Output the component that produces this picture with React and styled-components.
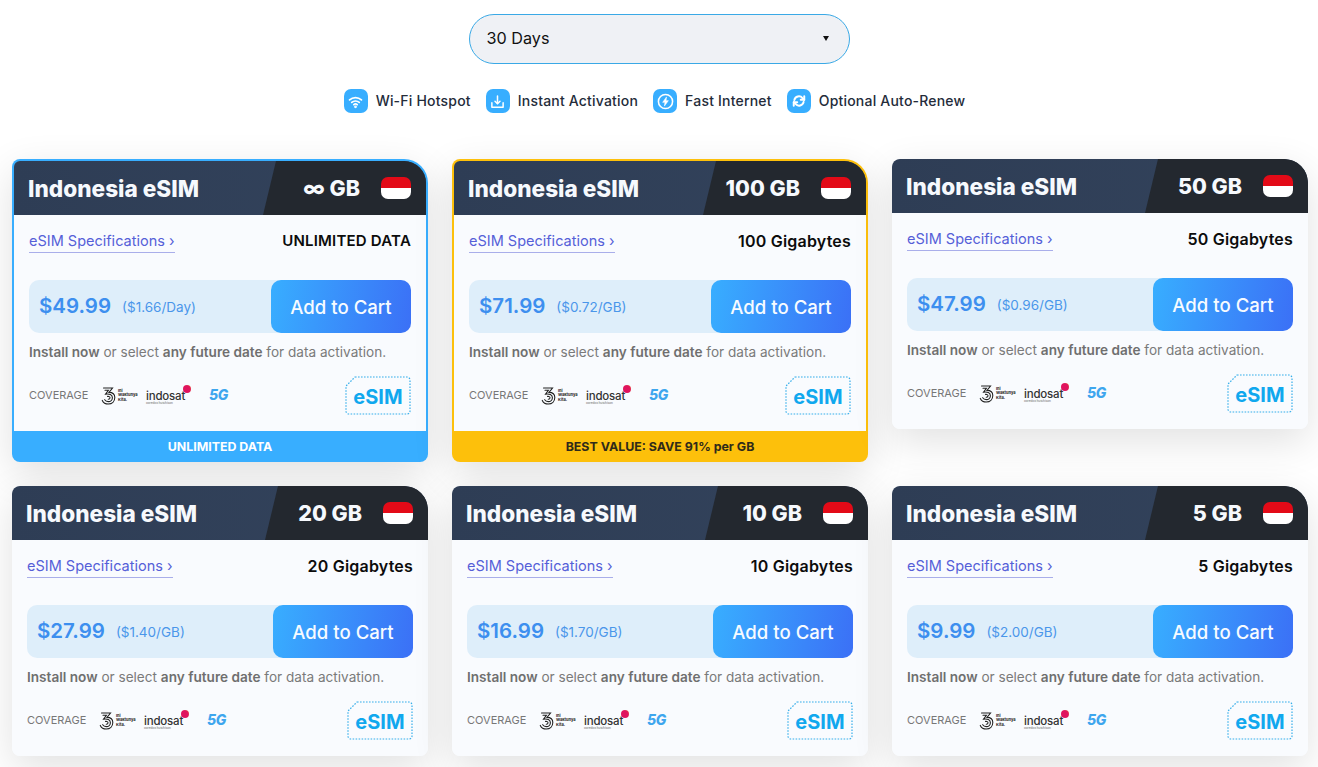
import React from "react";
import styled, { createGlobalStyle } from "styled-components";

const FONT = `Inter, "Noto Sans", "Liberation Sans", sans-serif`;

const plans = [
  { gb: "∞ GB", label: "UNLIMITED DATA", caps: true, price: "$49.99", unit: "($1.66/Day)", tone: "blue", banner: "UNLIMITED DATA" },
  { gb: "100 GB", label: "100 Gigabytes", price: "$71.99", unit: "($0.72/GB)", tone: "gold", banner: "BEST VALUE: SAVE 91% per GB" },
  { gb: "50 GB", label: "50 Gigabytes", price: "$47.99", unit: "($0.96/GB)" },
  { gb: "20 GB", label: "20 Gigabytes", price: "$27.99", unit: "($1.40/GB)" },
  { gb: "10 GB", label: "10 Gigabytes", price: "$16.99", unit: "($1.70/GB)" },
  { gb: "5 GB", label: "5 Gigabytes", price: "$9.99", unit: "($2.00/GB)" },
];

const toneColors = { blue: "#38aeff", gold: "#fdc00b" };

export default function App() {
  return (
    <Page>
      <GlobalStyle />
      <SelectWrap>
        <DaySelect>
          <span>30 Days</span>
          <Caret />
        </DaySelect>
      </SelectWrap>
      <Features>
        <Feature>
          <FeatureIcon>
            <svg width="15" height="15" viewBox="0 0 24 24" fill="none" stroke="#fff" strokeWidth="2.8" strokeLinecap="round">
              <path d="M2.5 9.5a14 14 0 0 1 19 0" />
              <path d="M6 13.5a9 9 0 0 1 12 0" />
              <path d="M9.3 17a4.2 4.2 0 0 1 5.4 0" />
              <circle cx="12" cy="20.5" r="0.8" fill="#fff" />
            </svg>
          </FeatureIcon>
          <FeatureText>Wi-Fi Hotspot</FeatureText>
        </Feature>
        <Feature>
          <FeatureIcon>
            <svg width="15" height="15" viewBox="0 0 24 24" fill="none" stroke="#fff" strokeWidth="2.4" strokeLinecap="round" strokeLinejoin="round">
              <path d="M3 14v7h18v-7" />
              <path d="M12 3v12" />
              <path d="M8 11.5l4 4 4-4" />
            </svg>
          </FeatureIcon>
          <FeatureText>Instant Activation</FeatureText>
        </Feature>
        <Feature>
          <FeatureIcon>
            <svg width="17" height="17" viewBox="0 0 24 24" fill="none" stroke="#fff" strokeWidth="2.2" strokeLinejoin="round">
              <circle cx="12" cy="12" r="10" />
              <path d="M13.4 5.5L8 13.2h3.2l-.7 5.3 5.5-7.7h-3.2z" fill="#fff" strokeWidth="0.8" />
            </svg>
          </FeatureIcon>
          <FeatureText>Fast Internet</FeatureText>
        </Feature>
        <Feature>
          <FeatureIcon>
            <svg width="14" height="14" viewBox="0 0 24 24" fill="none" stroke="#fff" strokeWidth="3.4" strokeLinecap="round" strokeLinejoin="round">
              <path d="M4 10.5a8 8 0 0 1 14-3.5L21 10" />
              <path d="M21 4v6h-6" />
              <path d="M20 13.5a8 8 0 0 1-14 3.5L3 14" />
              <path d="M3 20v-6h6" />
            </svg>
          </FeatureIcon>
          <FeatureText>Optional Auto-Renew</FeatureText>
        </Feature>
      </Features>
      <Grid>
        {plans.map((plan) => (
          <PlanCard key={plan.gb} plan={plan} />
        ))}
      </Grid>
    </Page>
  );
}

function PlanCard({ plan }) {
  const { tone } = plan;
  return (
    <Card $tone={tone}>
      <Header>
        <Title>Indonesia eSIM</Title>
        <HeaderRight>
          <Amount>{plan.gb}</Amount>
          <Flag />
        </HeaderRight>
      </Header>
      <Body>
        <SpecRow>
          <SpecLink>eSIM Specifications ›</SpecLink>
          <DataLabel $caps={plan.caps}>{plan.label}</DataLabel>
        </SpecRow>
        <PriceBar>
          <PriceInfo>
            <Price>{plan.price}</Price>
            <Unit>{plan.unit}</Unit>
          </PriceInfo>
          <CartButton>Add to Cart</CartButton>
        </PriceBar>
        <Note>
          <b>Install now</b> or select <b>any future date</b> for data activation.
        </Note>
        <CoverageRow>
          <Coverage>
            <CoverageLabel>COVERAGE</CoverageLabel>
            <TriLogo>
              <svg width="15" height="18" viewBox="0 0 15 18" fill="none" stroke="#222" strokeWidth="1.1" strokeLinecap="round">
                <path d="M2.5 1h9L8 5.4c3.3 0 5.8 1.8 5.8 5.2 0 4-2.9 6.4-6.5 6.4-2.8 0-5-1.4-6-3.6" />
                <path d="M4 3.2h3.4L4.6 7.1c3.6-.6 6.8.6 6.8 3.6 0 2.3-1.9 3.9-4.1 3.9-1.6 0-2.9-.8-3.6-1.9" />
                <path d="M6.5 9.4c1.4-.2 2.5.3 2.5 1.4 0 .9-.8 1.5-1.7 1.5" />
              </svg>
              <TriText>
                Ini
                <br />
                Waktunya
                <br />
                Kita.
              </TriText>
            </TriLogo>
            <Indosat>
              indosat
              <IndosatDot />
              <IndosatSub>ooredoo hutchison</IndosatSub>
            </Indosat>
            <FiveG>5G</FiveG>
          </Coverage>
          <EsimBadge>
            <BadgeFrame width="66" height="39" viewBox="0 0 66 39" fill="none">
              <path
                d="M10 1H62a3 3 0 0 1 3 3V35a3 3 0 0 1-3 3H4a3 3 0 0 1-3-3V10z"
                stroke="#35aeea"
                strokeWidth="1.2"
                strokeDasharray="1.6 1.4"
              />
            </BadgeFrame>
            eSIM
          </EsimBadge>
        </CoverageRow>
      </Body>
      {plan.banner && <Banner $tone={tone}>{plan.banner}</Banner>}
    </Card>
  );
}

const GlobalStyle = createGlobalStyle`
  html, body {
    margin: 0;
    padding: 0;
    background: #fff;
    font-family: ${FONT};
    overflow: hidden;
  }
  * { box-sizing: border-box; }
`;

const Page = styled.div`
  width: 1318px;
  height: 767px;
  overflow: hidden;
  padding: 14px 10px 0 12px;
`;

const SelectWrap = styled.div`
  display: flex;
  justify-content: center;
  padding-right: 2px;
`;

const DaySelect = styled.div`
  width: 381px;
  height: 50px;
  border: 1px solid #3aa9e6;
  border-radius: 25px;
  background: #eff1f5;
  display: flex;
  align-items: center;
  justify-content: space-between;
  padding: 0 20px 2px 17px;
  font-size: 16.2px;
  color: #111;
`;

const Caret = styled.i`
  width: 0;
  height: 0;
  border-left: 3px solid transparent;
  border-right: 3px solid transparent;
  border-top: 5px solid #111;
`;

const Features = styled.div`
  display: flex;
  justify-content: center;
  gap: 15px;
  margin-top: 25px;
  padding-right: 11px;
`;

const Feature = styled.div`
  display: flex;
  align-items: center;
  gap: 8px;
`;

const FeatureText = styled.span`
  font-size: 14px;
  font-weight: 500;
  letter-spacing: 0.2px;
  color: #242c3a;
  white-space: nowrap;
  padding-bottom: 2px;
`;

const FeatureIcon = styled.span`
  width: 24px;
  height: 24px;
  border-radius: 7px;
  background: #38aeff;
  display: flex;
  align-items: center;
  justify-content: center;
`;

const Grid = styled.div`
  display: grid;
  grid-template-columns: repeat(3, 416px);
  column-gap: 24px;
  row-gap: 24px;
  align-items: start;
  margin-top: 46px;
`;

const Card = styled.div`
  border-radius: 8px 24px 8px 8px;
  background: ${(p) => (p.$tone ? toneColors[p.$tone] : "#f9fbfe")};
  box-shadow: 0 12px 40px rgba(0, 0, 0, 0.12);
  overflow: hidden;
  padding: ${(p) => (p.$tone ? "2px 2px 0" : "0")};
`;

const Header = styled.div`
  height: 54px;
  display: flex;
  justify-content: space-between;
  background: linear-gradient(90deg, #2e3d55, #33435c);
  border-radius: 6px 22px 0 0;
  overflow: hidden;
`;

const Title = styled.div`
  padding-left: 14px;
  align-self: center;
  font-size: 22.6px;
  font-weight: 800;
  color: #f6f9fd;
  white-space: nowrap;
`;

const HeaderRight = styled.div`
  width: 163px;
  display: flex;
  align-items: center;
  justify-content: flex-end;
  gap: 21px;
  padding-right: 15px;
  background: #23282f;
  clip-path: polygon(13px 0, 100% 0, 100% 100%, 0 100%);
`;

const Amount = styled.div`
  font-size: 21.5px;
  font-weight: 800;
  color: #f6f9fd;
  white-space: nowrap;
`;

const Flag = styled.div`
  width: 30px;
  height: 22px;
  border-radius: 7px;
  background: linear-gradient(#e30a17 50%, #fff 50%);
`;

const Body = styled.div`
  background: #f9fbfe;
  padding: 0 15px 15px 15px;
  height: 216px;
`;

const SpecRow = styled.div`
  display: flex;
  align-items: flex-start;
  justify-content: space-between;
  padding-top: 15px;
  height: 65px;
`;

const SpecLink = styled.span`
  font-size: 14.5px;
  line-height: 21px;
  padding-bottom: 1px;
  border-bottom: 1px solid #a9aeea;
  color: #5560d8;
`;

const DataLabel = styled.span`
  font-size: ${(p) => (p.$caps ? "15px" : "16px")};
  letter-spacing: 0.2px;
  line-height: 22px;
  font-weight: 600;
  color: #0c0c0c;
`;

const PriceBar = styled.div`
  height: 53px;
  display: flex;
  align-items: stretch;
  justify-content: space-between;
  background: #deeefa;
  border-radius: 10px;
`;

const PriceInfo = styled.div`
  display: flex;
  align-items: center;
  gap: 11px;
  padding-left: 10px;
  padding-bottom: 3px;
`;

const Price = styled.span`
  font-size: 20.5px;
  font-weight: 600;
  color: #3d8fef;
`;

const Unit = styled.span`
  font-size: 13.5px;
  color: #4a96ea;
  padding-top: 3px;
`;

const CartButton = styled.button`
  width: 140px;
  border: none;
  border-radius: 10px;
  background: linear-gradient(100deg, #38aeff, #3b70f6);
  color: #f7fbff;
  font-family: ${FONT};
  font-size: 18.6px;
  font-weight: 500;
  padding: 0;
`;

const Note = styled.p`
  margin: 9px 0 0;
  font-size: 13.6px;
  line-height: 20px;
  color: #7a7a7a;
  white-space: nowrap;
  b {
    font-weight: 600;
    color: #6f6f6f;
  }
`;

const CoverageRow = styled.div`
  display: flex;
  align-items: center;
  justify-content: space-between;
  margin-top: 14px;
`;

const Coverage = styled.div`
  display: flex;
  align-items: center;
`;

const CoverageLabel = styled.span`
  font-size: 11px;
  color: #777;
  width: 72px;
  padding-bottom: 1px;
`;

const TriLogo = styled.div`
  display: flex;
  align-items: center;
  gap: 2px;
  width: 45px;
`;

const TriText = styled.span`
  font-size: 4px;
  line-height: 4.5px;
  font-weight: 700;
  color: #222;
`;

const Indosat = styled.div`
  position: relative;
  width: 63px;
  padding-top: 4px;
  font-size: 11.5px;
  font-weight: 500;
  line-height: 12px;
  color: #333;
  letter-spacing: -0.2px;
`;

const IndosatDot = styled.i`
  position: absolute;
  left: 37px;
  top: -1px;
  width: 8px;
  height: 8px;
  border-radius: 50%;
  background: radial-gradient(circle at 35% 60%, #e0145e 60%, #f08020);
`;

const IndosatSub = styled.span`
  display: block;
  font-size: 3px;
  line-height: 3px;
  letter-spacing: 0;
  color: #777;
`;

const FiveG = styled.span`
  font-size: 14px;
  font-weight: 800;
  font-style: italic;
  color: #3ea6ee;
  letter-spacing: -0.5px;
  padding-bottom: 2px;
`;

const EsimBadge = styled.div`
  position: relative;
  width: 66px;
  height: 39px;
  display: flex;
  align-items: center;
  justify-content: center;
  padding-top: 3px;
  font-size: 20px;
  font-weight: 700;
  color: #10a8ee;
`;

const BadgeFrame = styled.svg`
  position: absolute;
  inset: 0;
`;

const Banner = styled.div`
  height: 31px;
  margin: 0 -2px;
  padding-bottom: 1px;
  display: flex;
  align-items: center;
  justify-content: center;
  font-size: 12.4px;
  font-weight: 700;
  color: ${(p) => (p.$tone === "gold" ? "#2f2a1a" : "#fff")};
`;
